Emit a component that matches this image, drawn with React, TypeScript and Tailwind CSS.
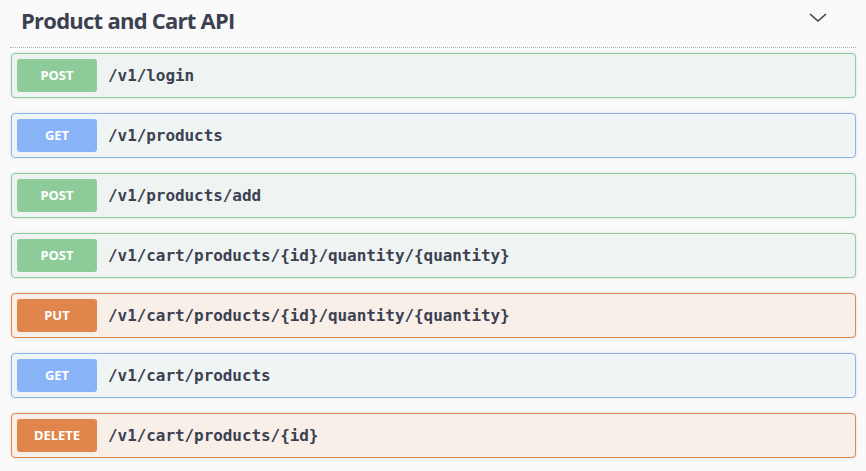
import React from "react";

type Op = { method: string; path: string };

const ops: Op[] = [
  { method: "POST", path: "/v1/login" },
  { method: "GET", path: "/v1/products" },
  { method: "POST", path: "/v1/products/add" },
  { method: "POST", path: "/v1/cart/products/{id}/quantity/{quantity}" },
  { method: "PUT", path: "/v1/cart/products/{id}/quantity/{quantity}" },
  { method: "GET", path: "/v1/cart/products" },
  { method: "DELETE", path: "/v1/cart/products/{id}" },
];

const styles: Record<string, { block: string; badge: string }> = {
  POST: { block: "bg-[#eff4f2] border-[#8ccb9b]", badge: "bg-[#8dcb98]" },
  GET: { block: "bg-[#eff4f5] border-[#8cb4f4]", badge: "bg-[#8ab4f8]" },
  PUT: { block: "bg-[#f8efe9] border-[#e0874d]", badge: "bg-[#e0864c]" },
  DELETE: { block: "bg-[#f8efe9] border-[#e0874d]", badge: "bg-[#e0864c]" },
};

export default function App() {
  return (
    <div className="w-[866px] h-[471px] bg-[#fafafa] overflow-hidden pl-[10px] pr-[10px]">
      <div className="flex items-center justify-between h-[40px] pl-[11px] pr-[28px]">
        <h3
          className="text-[#3b4151] text-[22px] font-bold tracking-[-0.75px]"
          style={{ fontFamily: '"Open Sans", "Noto Sans", sans-serif' }}
        >
          Product and Cart API
        </h3>
        <svg width="20" height="20" viewBox="0 0 20 20" className="mt-[-4px]">
          <path d="M2 6 L10 13 L18 6" fill="none" stroke="#3b4151" strokeWidth="1.6" />
        </svg>
      </div>
      <div className="border-b border-dotted border-[#9db2a8] mb-[5px] mt-[7px]" />
      <div className="flex flex-col gap-[15px] pl-[1px]">
        {ops.map((op, i) => {
          const s = styles[op.method];
          return (
            <div
              key={i}
              className={`h-[45px] rounded-[4px] border ${s.block} flex items-center pl-[5px] shadow-[0_0_3px_rgba(0,0,0,0.12)]`}
            >
              <div
                className={`w-[80px] h-[33px] rounded-[3px] ${s.badge} flex items-center justify-center text-white text-[13px] font-bold`}
                style={{ fontFamily: '"Noto Sans", "Open Sans", sans-serif' }}
              >
                {op.method}
              </div>
              <div
                className="ml-[11px] text-[16px] font-semibold text-[#3b4151] tracking-[-0.07px]"
                style={{ fontFamily: '"DejaVu Sans Mono", "Liberation Mono", monospace' }}
              >
                {op.path}
              </div>
            </div>
          );
        })}
      </div>
    </div>
  );
}
